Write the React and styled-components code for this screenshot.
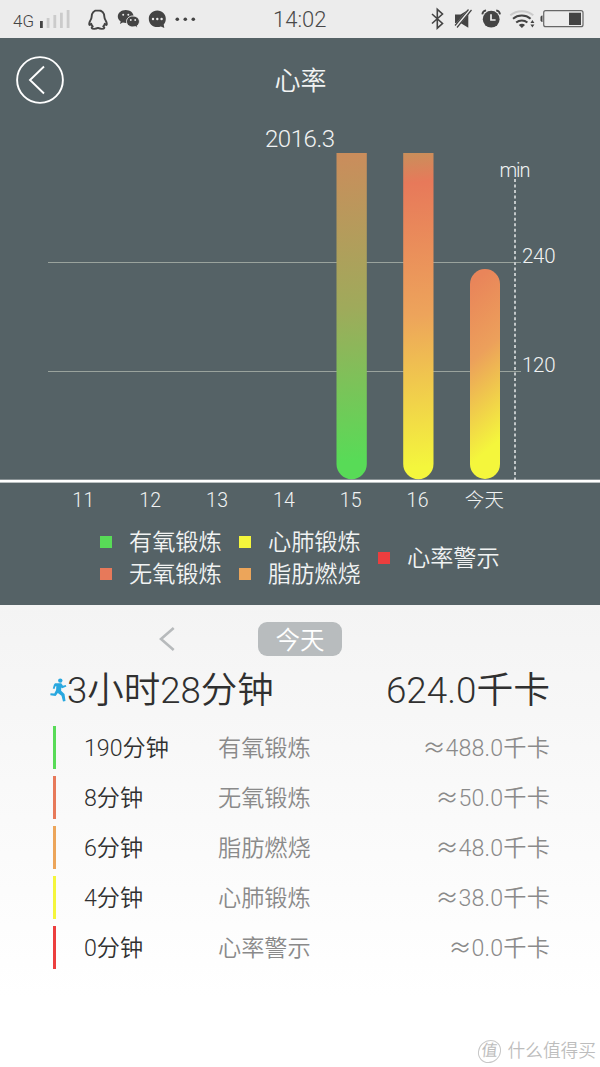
import React from "react";
import styled, { createGlobalStyle } from "styled-components";

const GREEN = "#58db57";
const CORAL = "#e7795a";
const ORANGE = "#eca55a";
const YELLOW = "#f4f63c";
const RED = "#ec3e3e";

const days = ["11", "12", "13", "14", "15", "16", "今天"];

const legend = [
    [
        { color: GREEN, name: "有氧锻炼" },
        { color: CORAL, name: "无氧锻炼" },
    ],
    [
        { color: YELLOW, name: "心肺锻炼" },
        { color: ORANGE, name: "脂肪燃烧" },
    ],
    [{ color: RED, name: "心率警示" }],
];

const records = [
    { color: GREEN, time: "190分钟", name: "有氧锻炼", kcal: "488.0千卡" },
    { color: CORAL, time: "8分钟", name: "无氧锻炼", kcal: "50.0千卡" },
    { color: ORANGE, time: "6分钟", name: "脂肪燃烧", kcal: "48.0千卡" },
    { color: YELLOW, time: "4分钟", name: "心肺锻炼", kcal: "38.0千卡" },
    { color: RED, time: "0分钟", name: "心率警示", kcal: "0.0千卡" },
];

function StatusLeft() {
    return (
        <svg width="210" height="38" viewBox="0 0 210 38">
            <text x="13" y="27" fontSize="16.5" fill="#444" textLength="21" lengthAdjust="spacingAndGlyphs">4G</text>
            <rect x="40" y="21" width="2.8" height="7" fill="#444" />
            <g fill="#cbcbcb">
                <rect x="46.7" y="18" width="2.8" height="10" />
                <rect x="53.4" y="15" width="2.8" height="13" />
                <rect x="60" y="12.7" width="2.8" height="15.3" />
                <rect x="66.7" y="10" width="2.8" height="18" />
            </g>
            {/* 펭귄 */}
            <path
                d="M98 10.3c-4.1 0-6.4 2.9-6.4 6.6 0 1.5-.6 2.4-1.4 3.8-1 1.8-1.3 3.9-.7 4.2.5.2 1.2-.5 1.7-1.1.3 1.1.8 1.9 1.6 2.6-1 .4-1.3 1-1 1.7.4 1 3.9 1.1 6.2-.2 2.3 1.3 5.8 1.2 6.2.2.3-.7 0-1.3-1-1.7.8-.7 1.3-1.5 1.6-2.6.5.6 1.2 1.3 1.7 1.1.6-.3.3-2.4-.7-4.2-.8-1.4-1.4-2.3-1.4-3.8 0-3.7-2.3-6.6-6.4-6.6z"
                fill="none" stroke="#444" strokeWidth="1.9" strokeLinejoin="round"
            />
            {/* 채팅 말풍선 두 개 */}
            <path d="M125.7 10c-4.4 0-7.9 2.9-7.9 6.5 0 2 1.1 3.8 2.9 5l-.8 2.5 2.9-1.5c1 .3 2 .4 3.1.4 4.3 0 7.7-2.9 7.7-6.5S130.1 10 125.7 10z" fill="#444" />
            <path d="M132.9 16c-3.6 0-6.4 2.4-6.4 5.5s2.8 5.5 6.4 5.5c.9 0 1.8-.2 2.5-.4l2.4 1.3-.6-2.1c1.4-1 2.2-2.5 2.2-4.3 0-3.1-2.9-5.5-6.5-5.5z" fill="#444" stroke="#ececec" strokeWidth="1" />
            <g fill="#ececec">
                <circle cx="123.2" cy="14.7" r="1" />
                <circle cx="128.3" cy="14.7" r="1" />
                <circle cx="130.8" cy="20" r=".9" />
                <circle cx="135.2" cy="20" r=".9" />
            </g>
            <path d="M157.3 10.5c-5 0-8.5 3.7-8.5 8.3 0 4.7 3.5 8.3 8.5 8.3 1.3 0 2.5-.2 3.6-.7l3.4 1.7-.6-3.5c1.4-1.5 2.1-3.5 2.1-5.8 0-4.6-3.5-8.3-8.5-8.3z" fill="#444" />
            <g fill="#ececec">
                <circle cx="153" cy="19" r="1.2" />
                <circle cx="157.3" cy="19" r="1.2" />
                <circle cx="161.6" cy="19" r="1.2" />
            </g>
            <g fill="#444">
                <circle cx="177.3" cy="19.3" r="1.8" />
                <circle cx="185.3" cy="19.3" r="1.8" />
                <circle cx="193.3" cy="19.3" r="1.8" />
            </g>
        </svg>
    );
}

function StatusRight() {
    return (
        <svg width="180" height="38" viewBox="420 0 180 38">
            <path d="M432 14l10.5 9.5-5.2 4.7V9.3l5.2 4.7L432 23.5" fill="none" stroke="#444" strokeWidth="1.6" />
            {/* 음소거 */}
            <path d="M455 14.500h5.500l7.800-4.800v18L460.500 23H455z" fill="#444" />
            <path d="M470.500 9L455 27.500" stroke="#ececec" strokeWidth="3.6" />
            <path d="M471.500 10L457 27.500M468.500 9.500L455 25.500" stroke="#444" strokeWidth="1.2" />
            {/* 알람 */}
            <circle cx="491.2" cy="19.2" r="8.4" fill="#444" />
            <path d="M491 14.3v5.7h4.6" fill="none" stroke="#ececec" strokeWidth="1.7" />
            <path d="M482.3 14.3c.2-2 1.7-3.5 3.8-3.9M500 14.3c-.2-2-1.7-3.5-3.8-3.9" fill="none" stroke="#444" strokeWidth="1.8" />
            {/* 와이파이 */}
            <g fill="none" strokeWidth="2">
                <path d="M510.3 15.2c6.4-5.4 16.6-5.4 23 0" stroke="#cbcbcb" />
                <path d="M513 18.8c5-4.3 12.6-4.3 17.6 0" stroke="#444" />
                <path d="M516.2 22.5c3.2-2.8 8-2.8 11.2 0" stroke="#444" />
            </g>
            <path d="M518.8 25c1.8-1.6 4.6-1.6 6.2 0l-3.1 3z" fill="#444" />
            <path d="M532.4 20l2 3h-4zM532.4 27.500l2-3h-4z" fill="#444" />
            <rect x="543.7" y="10.7" width="39.3" height="16" rx="2" fill="none" stroke="#666" strokeWidth="1.2" />
            <path d="M542.5 15.5h-.7l-1.3 1.3v4l1.3 1.3h.7z" fill="#444" />
            <rect x="569" y="12.7" width="12" height="12.3" fill="#444" />
        </svg>
    );
}

function Chart() {
    return (
        <svg width="600" height="363" viewBox="0 121 600 363">
            <defs>
                <linearGradient id="bar15" gradientUnits="userSpaceOnUse" x1="337" y1="156" x2="362" y2="460">
                    <stop offset="0" stopColor="#ca8d5c" />
                    <stop offset=".5" stopColor="#9faa5b" />
                    <stop offset="1" stopColor={GREEN} />
                </linearGradient>
                <linearGradient id="bar16" gradientUnits="userSpaceOnUse" x1="404" y1="152" x2="434" y2="466">
                    <stop offset="0" stopColor="#c8905b" />
                    <stop offset=".1" stopColor={CORAL} />
                    <stop offset=".52" stopColor="#eda45b" />
                    <stop offset="1" stopColor={YELLOW} />
                </linearGradient>
                <linearGradient id="barToday" gradientUnits="userSpaceOnUse" x1="485" y1="272" x2="574" y2="376">
                    <stop offset="0" stopColor="#e9855a" />
                    <stop offset=".43" stopColor="#eca05b" />
                    <stop offset="1" stopColor={YELLOW} />
                </linearGradient>
            </defs>
            <path d="M48 262.5H521M48 371.5H521" stroke="#9aa39d" strokeWidth="1.2" />
            <path d="M515 179V480" stroke="#c3c8c9" strokeWidth="2" strokeDasharray="3 2.53" />
            <path d="M336.5 153h30.3v311a15.15 15.15 0 0 1-30.3 0z" fill="url(#bar15)" />
            <path d="M403.2 153h30.3v311a15.15 15.15 0 0 1-30.3 0z" fill="url(#bar16)" />
            <rect x="470" y="269" width="30" height="210" rx="15" fill="url(#barToday)" />
            <rect y="479.7" width="600" height="2.9" fill="#fff" />
            <ChartText x="265" y="147" fontSize="24" textLength="70">2016.3</ChartText>
            <ChartText x="499.5" y="177" fontSize="20" textLength="31">min</ChartText>
            <ChartText x="522" y="263" fontSize="20.5" textLength="33.5">240</ChartText>
            <ChartText x="522" y="372" fontSize="20.5" textLength="33.5">120</ChartText>
        </svg>
    );
}

function Runner() {
    return (
        <svg width="17" height="24" viewBox="0 0 17 24">
            <circle cx="10.3" cy="2.6" r="2.2" fill="#29a8df" />
            <path d="M5 5.2h6.2l1.800 2.600 2.700-.8.700 1.600-4.200 1.700-.9-.7-.2 3.200 3.400 3.200 1 7-2.500.4-1.500-5.700-3.700-2.800-2.200 3.100-5.300-.7.200-2.100 3.800.2 1.800-3.300.2-4-1 .4-.8 2.500-1.700-.5 1.100-3.700z" fill="#29a8df" />
        </svg>
    );
}

export default function App() {
    return (
        <Page>
            <GlobalStyle />
            <StatusBar>
                <StatusLeft />
                <Clock>14:02</Clock>
                <StatusRight />
            </StatusBar>
            <ChartPanel>
                <Header>
                    <BackButton aria-label="返回">
                        <svg width="48" height="48" viewBox="0 0 48 48" fill="none" stroke="#fff">
                            <circle cx="24" cy="24" r="22.9" strokeWidth="1.9" />
                            <path d="M28 10.5L14 24l14 13.5" strokeWidth="1.9" />
                        </svg>
                    </BackButton>
                    <Title>心率</Title>
                </Header>
                <Chart />
                <Days>
                    {days.map((day) => <Day key={day}>{day}</Day>)}
                </Days>
                <Legend>
                    {legend.map((column, i) => (
                        <LegendColumn key={i}>
                            {column.map((item) => (
                                <LegendItem key={item.name}>
                                    <Swatch $color={item.color} />
                                    {item.name}
                                </LegendItem>
                            ))}
                        </LegendColumn>
                    ))}
                </Legend>
            </ChartPanel>
            <Detail>
                <DayNav>
                    <PrevButton aria-label="前一天">
                        <svg width="16" height="24" viewBox="0 0 16 24" fill="none" stroke="#b7babc" strokeWidth="2.6">
                            <path d="M14.7 1L2 12l12.7 11" />
                        </svg>
                    </PrevButton>
                    <DayBadge>今天</DayBadge>
                </DayNav>
                <Summary>
                    <Runner />
                    <Total>3小时28分钟</Total>
                    <TotalKcal>624.0千卡</TotalKcal>
                </Summary>
                {records.map((record) => (
                    <Row key={record.name} $color={record.color}>
                        <Time>{record.time}</Time>
                        <Kind>{record.name}</Kind>
                        <Kcal><Approx>≈</Approx>{record.kcal}</Kcal>
                    </Row>
                ))}
                <Watermark>
                    <Seal>值</Seal>
                    什么值得买
                </Watermark>
            </Detail>
        </Page>
    );
}

const GlobalStyle = createGlobalStyle`
    * {
        box-sizing: border-box;
    }

    body {
        margin: 0;
        font-family: Roboto, "Noto Sans CJK SC", sans-serif;
        font-weight: 350;
    }

    svg {
        display: block;
        flex: none;
    }
`;

const Page = styled.div`
    width: 600px;
    height: 1067px;
    display: flex;
    flex-direction: column;
    overflow: hidden;
    white-space: nowrap;
`;

const StatusBar = styled.div`
    height: 38px;
    display: flex;
    background: #ececec;
`;

const Clock = styled.div`
    flex: 1;
    padding-left: 63px;
    line-height: 40px;
    font-size: 22px;
    color: #484848;
`;

const ChartPanel = styled.section`
    height: 567px;
    background: #556266;
    color: #f1f3f3;
`;

const Header = styled.header`
    height: 83px;
    display: grid;
    grid-template-columns: 64px 1fr 64px;
    align-items: center;
    padding: 0 16px;
`;

const BackButton = styled.button`
    width: 48px;
    height: 48px;
    padding: 0;
    border: 0;
    background: none;
`;

const Title = styled.h1`
    margin: 0;
    padding: 3px 0 0 1px;
    text-align: center;
    font-size: 26px;
    font-weight: 350;
    line-height: 38px;
`;

const ChartText = styled.text`
    fill: #f1f3f3;
    font-weight: 300;
`;

const Days = styled.div`
    height: 32px;
    width: 468px;
    margin-left: 50px;
    display: grid;
    grid-template-columns: repeat(7, 1fr);
`;

const Day = styled.div`
    text-align: center;
    font-size: 19.5px;
    font-weight: 300;
    letter-spacing: 0.3px;
    line-height: 34px;
`;

const Legend = styled.div`
    height: 74px;
    padding-top: 10px;
    margin-left: 100px;
    display: flex;
    align-items: center;
`;

const LegendColumn = styled.div`
    width: 139px;
    flex: none;
`;

const LegendItem = styled.div`
    height: 32px;
    display: flex;
    align-items: center;
    gap: 17px;
    font-size: 23.2px;
    line-height: 36px;
`;

const Swatch = styled.span`
    width: 12px;
    height: 12px;
    margin-bottom: 1px;
    background: ${({ $color }) => $color};
`;

const Detail = styled.section`
    flex: 1;
    display: flex;
    flex-direction: column;
    padding: 17px 4px 3px 50px;
    background: linear-gradient(#f4f4f4, #fff 85%);
`;

const DayNav = styled.div`
    height: 34px;
    display: flex;
    align-items: center;
    gap: 83px;
    padding-left: 109px;
`;

const PrevButton = styled.button`
    padding: 0;
    border: 0;
    background: none;
`;

const DayBadge = styled.div`
    width: 84px;
    height: 34px;
    border-radius: 9px;
    background: #b8bcbe;
    color: #fff;
    text-align: center;
    font-size: 24.5px;
    line-height: 37px;
`;

const Summary = styled.div`
    height: 70px;
    display: flex;
    align-items: center;
    padding: 0 46px 3px 0;
    font-size: 36.5px;
    line-height: 50px;
    color: #303030;
`;

const Total = styled.div`
    flex: 1;
    padding-top: 2px;
`;

const TotalKcal = styled.div`
    padding-top: 2px;
    font-size: 36.8px;
`;

const Row = styled.div`
    height: 43px;
    flex: none;
    display: grid;
    grid-template-columns: 134px 1fr auto;
    align-items: center;
    margin: 0 46px 7px 3px;
    padding-left: 28px;
    border-left: 3px solid ${({ $color }) => $color};
    font-size: 23.2px;
    line-height: 34px;
`;

const Time = styled.div`
    color: #303030;
`;

const Kind = styled.div`
    color: #8a8a8a;
`;

const Kcal = styled.div`
    color: #8a8a8a;
    letter-spacing: 0.15px;
`;

const Approx = styled.span`
    display: inline-block;
    width: 23px;
    font-family: "Noto Sans CJK SC", sans-serif;
    line-height: 1;
`;

const Watermark = styled.div`
    margin-top: auto;
    display: flex;
    align-items: center;
    justify-content: flex-end;
    gap: 7px;
    font-size: 17.7px;
    line-height: 26px;
    color: #bdbdbd;
`;

const Seal = styled.span`
    width: 23px;
    height: 23px;
    border: 1px solid #c8c8c8;
    border-radius: 50%;
    text-align: center;
    font-size: 16px;
    font-weight: 400;
    line-height: 20px;
    transform: skewX(-6deg);
`;
